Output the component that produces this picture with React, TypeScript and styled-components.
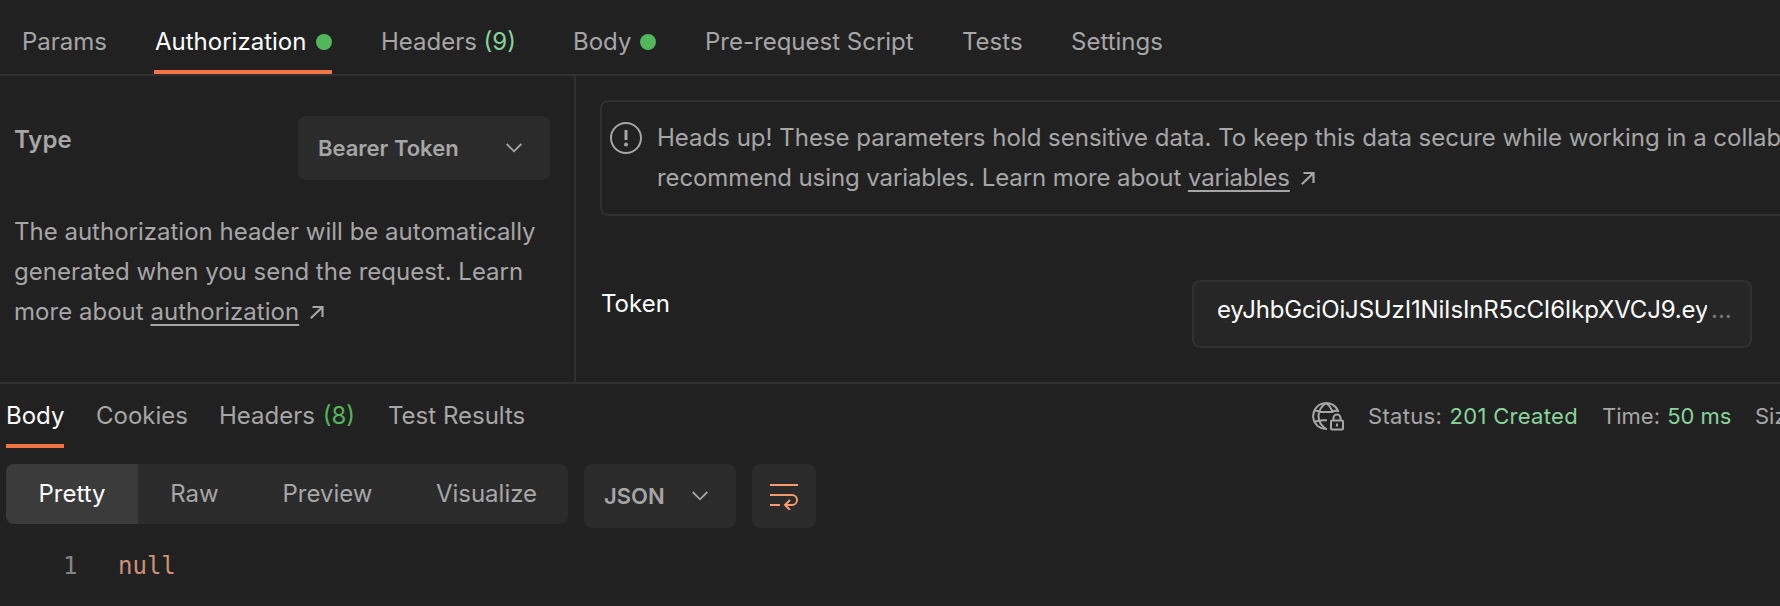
import React from 'react';
import styled, { createGlobalStyle } from 'styled-components';

const c = {
  bg: '#212121', border: '#303030', panel: '#2b2b2b', field: '#262626', active: '#3b3b3b',
  muted: '#a6a6a6', text: '#ffffff', green: '#53b65b', mint: '#87d49a', orange: '#f27445', peach: '#f79a6e', str: '#ce9178',
};

const Global = createGlobalStyle`
  * { box-sizing: border-box; }
  body { margin: 0; background: ${c.bg}; overflow: hidden; }
`;
const Page = styled.div`
  width: 100vw; height: 606px; overflow: hidden; background: ${c.bg}; color: ${c.muted};
  font: 400 24px/40px Inter, sans-serif; letter-spacing: 0; white-space: nowrap;
  display: flex; flex-direction: column;
`;
const RequestTabs = styled.nav`
  display: flex; flex: none; height: 76px; padding-left: 21px; border-bottom: 2px solid ${c.border};
`;
const RequestTab = styled.div<{ $w: number; $gap?: number; $active?: boolean }>`
  display: flex; align-items: center; justify-content: space-between; flex: none;
  width: ${p => p.$w}px; margin-right: ${p => p.$gap ?? 48}px; padding: 14px 0 0 1px;
  border-bottom: 4px solid ${p => (p.$active ? c.orange : 'transparent')};
  color: ${p => (p.$active ? c.text : c.muted)};
`;
const Dot = styled.i`
  width: 16px; height: 16px; border-radius: 50%; background: ${c.green};
`;
const Count = styled.span<{ $color: string }>`color: ${p => p.$color};`;

const Main = styled.section`
  display: flex; flex: none; height: 308px; border-bottom: 2px solid ${c.border};
`;
const Side = styled.aside`
  width: 576px; flex: none; padding: 40px 24px 0 14px; border-right: 2px solid ${c.border};
`;
const TypeRow = styled.div`
  display: flex; justify-content: space-between; align-items: flex-start; height: 96px;
`;
const TypeLabel = styled.span`font-weight: 600; padding-top: 4px;`;
const Select = styled.button<{ $w: number }>`
  display: flex; align-items: center; justify-content: space-between; flex: none;
  width: ${p => p.$w}px; height: 64px; padding: 0 28px 0 20px; border: 0; border-radius: 8px;
  background: ${c.panel}; color: ${c.muted}; font: 600 22px/40px Inter, sans-serif; letter-spacing: 0;
`;
const Line = styled.div<{ $spacing?: number }>`
  height: 40px; display: flex; align-items: center; white-space: pre; letter-spacing: ${p => p.$spacing ?? 0}px;
`;
const Link = styled.a`
  text-decoration: underline; text-decoration-thickness: 2px; text-underline-offset: 4px; text-decoration-skip-ink: none;
`;
const Details = styled.div`flex: 1; min-width: 0; padding: 24px 0 0 24px; overflow: hidden;`;
const Alert = styled.div`
  display: flex; width: 1400px; height: 116px; padding: 16px 0 0 8px; border: 2px solid ${c.border}; border-radius: 8px;
`;
const AlertIcon = styled.svg`margin: 4px 15px 0 0; flex: none;`;
const TokenRow = styled.div`
  display: flex; justify-content: space-between; margin-top: 64px; padding-right: 28px; color: ${c.text};
`;
const TokenLabel = styled.label`padding: 4px 0 0 1px;`;
const TokenField = styled.div`
  display: flex; width: 560px; height: 68px; padding: 8px 19px 0 23px; border: 2px solid ${c.border};
  border-radius: 8px; background: ${c.field};
`;
const TokenValue = styled.span`width: 490px; flex: none; overflow: hidden; height: 44px; letter-spacing: -0.16px;`;
const Ellipsis = styled.span`color: #777; margin-left: 4px;`;

const ResponseBar = styled.div`
  display: flex; justify-content: space-between; flex: none; height: 80px; padding-left: 6px;
`;
const ResponseTabs = styled.nav`display: flex; height: 64px;`;
const ResponseTab = styled.div<{ $w: number; $active?: boolean }>`
  width: ${p => p.$w}px; height: 64px; margin-right: 32px; padding-top: 12px;
  border-bottom: 4px solid ${p => (p.$active ? c.orange : 'transparent')};
  color: ${p => (p.$active ? c.text : c.muted)};
  span { margin-left: 1px; }
`;
const StatusGroup = styled.div`
  display: flex; width: 468px; font-size: 22px; padding-top: 12px; overflow: hidden;
`;
const GlobeIcon = styled.svg`flex: none; margin: 6px 24px 0 0;`;
const Stat = styled.div<{ $w: number; $spacing?: number }>`
  display: flex; flex: none; width: ${p => p.$w}px; white-space: pre; letter-spacing: ${p => p.$spacing ?? 0}px;
  b { font-weight: 400; color: ${c.mint}; margin-left: 1px; }
`;
const Toolbar = styled.div`display: flex; flex: none; height: 64px; padding-left: 6px; gap: 16px;`;
const Segments = styled.div`
  display: flex; width: 562px; height: 60px; border-radius: 8px; overflow: hidden; background: ${c.panel};
`;
const Segment = styled.div<{ $w: number; $active?: boolean }>`
  width: ${p => p.$w}px; padding: 10px 0 0 ${p => (p.$active ? 0 : 1)}px; text-align: center;
  background: ${p => (p.$active ? c.active : 'transparent')};
  color: ${p => (p.$active ? c.text : c.muted)};
`;
const WrapButton = styled.button`
  display: grid; place-items: center; width: 64px; height: 64px; padding: 0; border: 0; border-radius: 8px; background: ${c.panel};
`;
const Code = styled.div`
  display: flex; padding: 18px 0 0 63px; font-family: "DejaVu Sans Mono", monospace; color: ${c.str};
`;
const LineNo = styled.span`width: 55px; color: #858585;`;
const ArrowIcon = styled.svg`margin-left: 11px;`;

const Chevron = () => (
  <svg width="16" height="10" viewBox="0 0 16 10" fill="none" stroke={c.muted} strokeWidth="1.8"><path d="M.7 1 8 8.3 15.3 1" /></svg>
);
const Arrow = () => (
  <ArrowIcon width="14" height="14" viewBox="0 0 14 14" fill="none" stroke={c.muted} strokeWidth="2.2">
    <path d="M2.500 2H12.500v10M12.500 2 .800 13.200" />
  </ArrowIcon>
);

export default function App() {
  return (
    <Page>
      <Global />
      <RequestTabs>
        <RequestTab $w={85}><span>Params</span></RequestTab>
        <RequestTab $w={178} $active><span>Authorization</span><Dot /></RequestTab>
        <RequestTab $w={136} $gap={56}><span>Headers</span><Count $color={c.mint}>(9)</Count></RequestTab>
        <RequestTab $w={84}><span>Body</span><Dot /></RequestTab>
        <RequestTab $w={209}><span>Pre-request Script</span></RequestTab>
        <RequestTab $w={61}><span>Tests</span></RequestTab>
        <RequestTab $w={94}><span>Settings</span></RequestTab>
      </RequestTabs>
      <Main>
        <Side>
          <TypeRow>
            <TypeLabel>Type</TypeLabel>
            <Select $w={252}><span>Bearer Token</span><Chevron /></Select>
          </TypeRow>
          <Line>The authorization header will be automatically</Line>
          <Line>generated when you send the request. Learn</Line>
          <Line $spacing={0.03}>more about <Link>authorization</Link><Arrow /></Line>
        </Side>
        <Details>
          <Alert>
            <AlertIcon width="32" height="32" viewBox="0 0 32 32" fill="none" stroke={c.muted}>
              <circle cx="16" cy="16" r="15" strokeWidth="2" />
              <path d="M16 8v10" strokeWidth="3" />
              <circle cx="16" cy="22.500" r="2" fill={c.muted} stroke="none" />
            </AlertIcon>
            <div>
              <Line>Heads up! These parameters hold sensitive data. To keep this data secure while working in a collaborative environment, we</Line>
              <Line $spacing={-0.09}>recommend using variables. Learn more about <Link>variables</Link><Arrow /></Line>
            </div>
          </Alert>
          <TokenRow>
            <TokenLabel>Token</TokenLabel>
            <TokenField><TokenValue>eyJhbGciOiJSUzI1NiIsInR5cCI6IkpXVCJ9.ey</TokenValue><Ellipsis>...</Ellipsis></TokenField>
          </TokenRow>
        </Details>
      </Main>
      <ResponseBar>
        <ResponseTabs>
          <ResponseTab $w={58} $active>Body</ResponseTab>
          <ResponseTab $w={91}>Cookies</ResponseTab>
          <ResponseTab $w={137}>Headers <Count $color={c.green}>(8)</Count></ResponseTab>
          <ResponseTab $w={138}>Test Results</ResponseTab>
        </ResponseTabs>
        <StatusGroup>
          <GlobeIcon width="32" height="30" viewBox="0 0 32 30" fill="none" stroke={c.muted} strokeWidth="2">
            <path d="M26.500 10A13 13 0 1 0 15 27M14 1C4 8 4 20 14 27M14 1c4 3 6 6 6.500 10M3 8.500c6 2 16 2 22 0M3 19.500c4-1 8-1.500 12-1.200" />
            <rect x="19" y="18.500" width="12" height="9" rx="1" />
            <path d="M21.500 18v-2a3.500 3.500 0 0 1 7 0v2M25 21.500v3" />
          </GlobeIcon>
          <Stat $w={234} $spacing={0.3}>Status: <b>201 Created</b></Stat>
          <Stat $w={153}>Time: <b>50 ms</b></Stat>
          <Stat $w={120}>Size: <b>238 B</b></Stat>
        </StatusGroup>
      </ResponseBar>
      <Toolbar>
        <Segments>
          <Segment $w={132} $active>Pretty</Segment>
          <Segment $w={112}>Raw</Segment>
          <Segment $w={154}>Preview</Segment>
          <Segment $w={164}>Visualize</Segment>
        </Segments>
        <Select $w={152}><span>JSON</span><Chevron /></Select>
        <WrapButton>
          <svg width="28" height="28" viewBox="0 0 28 28" fill="none" stroke={c.peach} strokeWidth="2">
            <path d="M0 3h28M0 13h22a5 5 0 0 1 0 10h-6M0 23h10M20 18l-5 5 5 5" />
          </svg>
        </WrapButton>
      </Toolbar>
      <Code><LineNo>1</LineNo><span>null</span></Code>
    </Page>
  );
}
